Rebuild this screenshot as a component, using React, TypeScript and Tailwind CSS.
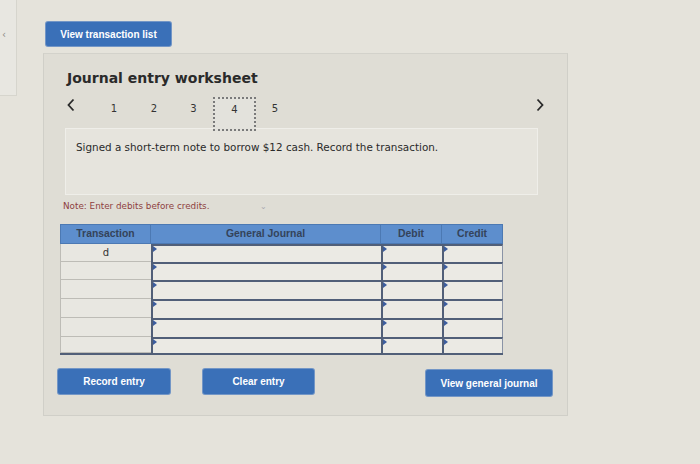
import React from "react";

const dv = { fontFamily: '"DejaVu Sans", Verdana, sans-serif' };
const ar = { fontFamily: '"Liberation Sans", Arial, sans-serif' };

function Btn({ w, h, children }: { w: string; h: string; children: React.ReactNode }) {
  return (
    <div
      className={`${w} ${h} flex items-center justify-center bg-[#3a70b8] text-white font-bold text-[10px] rounded-[2px] shadow-[0_0_0_1px_#7396c6]`}
      style={ar}
    >
      {children}
    </div>
  );
}

function InputCell({ w, last }: { w: string; last?: boolean }) {
  return (
    <div
      className={`${w} relative bg-[#ebeae4] border-t-2 border-l-2 border-[#515f78] ${last ? "border-r border-r-[#8a93a6]" : ""}`}
    >
      <div className="absolute left-0 top-0 w-0 h-0 border-t-[3px] border-b-[3px] border-l-[4px] border-t-transparent border-b-transparent border-l-[#3c5d9e]" />
    </div>
  );
}

export default function App() {
  const rows = [
    { h: "h-[18px]", t: "d" },
    { h: "h-[18px]", t: "" },
    { h: "h-[19px]", t: "" },
    { h: "h-[19px]", t: "" },
    { h: "h-[19px]", t: "" },
    { h: "h-[18px]", t: "" },
  ];
  return (
    <div className="w-[700px] h-[464px] bg-[#e5e3db] flex overflow-hidden">
      {/* left strip */}
      <div className="w-[17px] shrink-0">
        <div className="h-[96px] border-r border-b border-[#d6d5cd] bg-[#e8e7e1] pt-[27px] pl-[2px] text-[10px] text-[#8c8c88]" style={dv}>
          ‹
        </div>
      </div>

      {/* main */}
      <div className="ml-[26px] pt-[22px] flex flex-col">
        <div className="ml-[3px]">
          <Btn w="w-[125px]" h="h-[24px]">View transaction list</Btn>
        </div>

        <div className="mt-[7px] w-[525px] h-[363px] bg-[#dfddd5] border border-[#d0cfc8] border-t-[#d3d2cb] flex flex-col">
          <div className="mt-[14px] pl-[23px] h-[20px] text-[14px] font-bold text-[#2a2a2a] leading-[20px]" style={dv}>
            Journal entry worksheet
          </div>

          {/* pagination */}
          <div className="mt-[9px] h-[31px] flex items-start pl-[22px] pr-[22px] text-[10px] text-[#333]" style={dv}>
            <div className="w-[28px] pt-[1px]">
              <svg width="10" height="14" viewBox="0 0 10 14">
                <path d="M7.5 1.5 L2.5 7 L7.5 12.5" fill="none" stroke="#2a2a2a" strokeWidth="1.8" />
              </svg>
            </div>
            <div className="w-[40px] text-center pt-[4px]">1</div>
            <div className="w-[40px] text-center pt-[4px]">2</div>
            <div className="w-[39px] text-center pt-[4px]">3</div>
            <div className="w-[43px] h-[34px] relative z-10 border-2 border-dotted border-[#7a7a7a] bg-[#e3e2dc] text-center pt-[3px]">4</div>
            <div className="w-[38px] text-center pt-[4px]">5</div>
            <div className="ml-auto pt-[1px]">
              <svg width="10" height="14" viewBox="0 0 10 14">
                <path d="M2.5 1.5 L7.5 7 L2.5 12.5" fill="none" stroke="#2a2a2a" strokeWidth="1.8" />
              </svg>
            </div>
          </div>

          {/* text box */}
          <div className="ml-[21px] w-[473px] h-[67px] bg-[#e6e4dd] border border-[#efeee9] pl-[10px] pt-[11px] text-[10.4px] text-[#2a2a2a]" style={dv}>
            Signed a short-term note to borrow $12 cash. Record the transaction.
          </div>

          {/* note */}
          <div className="mt-[5px] ml-[19px] h-[14px] flex items-center text-[8.8px] text-[#8e3f3f]" style={dv}>
            <span className="w-[197px]">Note: Enter debits before credits.</span>
            <span className="text-[8px] text-[#a9a9b0]">⌄</span>
          </div>

          {/* table */}
          <div className="mt-[10px] ml-[16px] w-[443px] flex flex-col">
            <div className="h-[20px] flex bg-[#5d8ecd] border border-[#4c79b3] text-[10.4px] font-bold text-[#34435a]" style={ar}>
              <div className="w-[90px] flex items-center justify-center border-r border-[#4c79b3]">Transaction</div>
              <div className="w-[230px] flex items-center justify-center border-r border-[#4c79b3]">General Journal</div>
              <div className="w-[61px] flex items-center justify-center border-r border-[#4c79b3]">Debit</div>
              <div className="flex-1 flex items-center justify-center">Credit</div>
            </div>
            {rows.map((r, i) => (
              <div key={i} className={`${r.h} flex ${i === rows.length - 1 ? "border-b-2 border-[#515f78]" : ""}`}>
                <div
                  className="w-[91px] bg-[#e8e7e1] border-l border-b border-[#bdbcb6] flex items-center justify-center text-[10px] text-[#333]"
                  style={dv}
                >
                  {r.t}
                </div>
                <InputCell w="w-[230px]" />
                <InputCell w="w-[61px]" />
                <InputCell w="flex-1" last />
              </div>
            ))}
          </div>

          {/* buttons */}
          <div className="mt-[14px] ml-[14px] flex items-start">
            <Btn w="w-[112px]" h="h-[25px]">Record entry</Btn>
            <div className="ml-[33px]">
              <Btn w="w-[111px]" h="h-[25px]">Clear entry</Btn>
            </div>
            <div className="ml-[112px] mt-[1px]">
              <Btn w="w-[126px]" h="h-[26px]">View general journal</Btn>
            </div>
          </div>
        </div>
      </div>
    </div>
  );
}
